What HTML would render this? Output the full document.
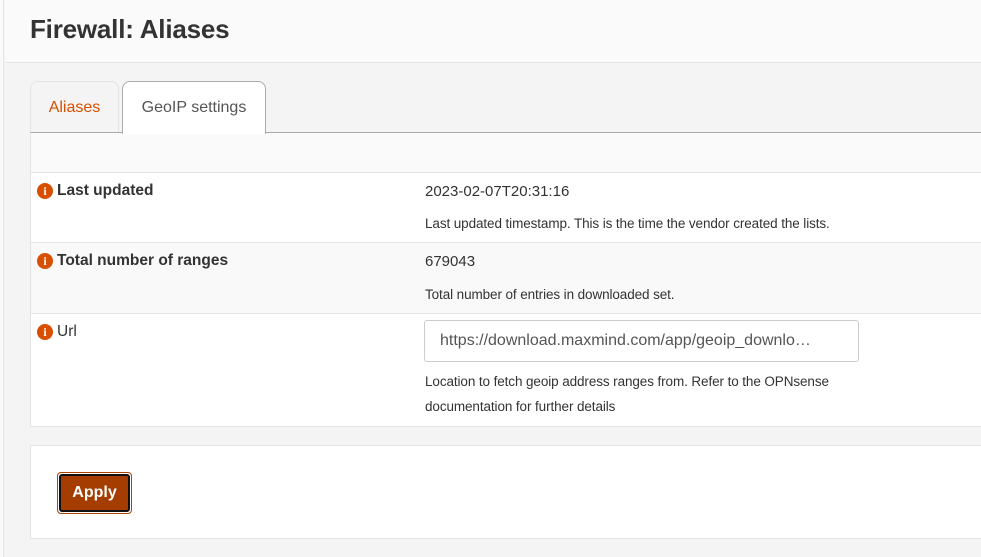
<!DOCTYPE html>
<html><head><style>
*{box-sizing:border-box;margin:0;padding:0}
body{width:981px;height:557px;overflow:hidden;background:#f4f4f4;font-family:"Liberation Sans",sans-serif;color:#333;position:relative}
.lb{position:absolute;left:0;top:0;width:4px;height:557px;background:#fafafa;border-right:1px solid #e4e4e4}
.hdr{position:absolute;left:5px;top:0;width:976px;height:63px;background:#fafafa;border-bottom:1px solid #e5e5e5}
.hdr h1{position:absolute;left:25px;top:14px;font-size:26px;font-weight:bold;color:#333;letter-spacing:-0.2px}
.tab{position:absolute;top:81px;height:52px;border:1px solid #e3e3e3;border-bottom:none;border-radius:8px 8px 0 0;font-size:16px;line-height:52px;text-align:center}
.t1{left:30px;width:89px;color:#d94f00;background:#f4f4f4}
.t2{left:122px;width:144px;background:#fff;border-color:#aaa;color:#555;height:53px;z-index:2}
.panel{position:absolute;left:30px;top:132px;width:960px;height:295px;background:#fff;border:1px solid #e3e3e3;border-top:1px solid #aaa;overflow:hidden}
.row{position:absolute;left:0;width:100%;border-top:1px solid #e6e6e6}
.lab{position:absolute;left:6px;top:9px;font-size:15.5px;font-weight:bold;color:#333;display:flex;align-items:center}
.ic{width:16px;height:16px;border-radius:50%;background:#d94f00;color:#fff;font:bold 12px "Liberation Serif",serif;text-align:center;line-height:16px;margin-right:4px}
.val{position:absolute;left:394px;font-size:15px;color:#333}
.help{position:absolute;left:394px;font-size:13.5px;color:#333;line-height:25px;letter-spacing:-0.1px}
.inp{position:absolute;left:393px;top:6px;width:435px;height:42px;border:1px solid #ccc;border-radius:3px;font-size:16px;color:#555;line-height:40px;padding-left:15px;white-space:nowrap;overflow:hidden}
.p2{position:absolute;left:30px;top:445px;width:960px;height:94px;background:#fff;border:1px solid #e3e3e3}
.btn{position:absolute;left:26px;top:26px;width:75px;height:42px;border:1px solid #a84300;border-radius:4px;padding:1px}
.btn div{width:100%;height:100%;background:#a63d00;border:2px solid #111;border-radius:3px;color:#fff;font-weight:bold;font-size:16px;text-align:center;line-height:34px}
</style></head><body>
<div class="lb"></div>
<div class="hdr"><h1>Firewall: Aliases</h1></div>
<div class="tab t1">Aliases</div>
<div class="tab t2">GeoIP settings</div>
<div class="panel">
 <div class="row" style="top:0;height:40px;background:#fafafa;border-top:none"></div>
 <div class="row" style="top:39px;height:70px;background:#fff">
  <div class="lab"><span class="ic">i</span>Last updated</div>
  <div class="val" style="top:10px">2023-02-07T20:31:16</div>
  <div class="help" style="top:38px">Last updated timestamp. This is the time the vendor created the lists.</div>
 </div>
 <div class="row" style="top:109px;height:71px;background:#f9f9f9">
  <div class="lab"><span class="ic">i</span>Total number of ranges</div>
  <div class="val" style="top:10px">679043</div>
  <div class="help" style="top:39px">Total number of entries in downloaded set.</div>
 </div>
 <div class="row" style="top:180px;height:113px;background:#fff">
  <div class="lab"><span class="ic">i</span><span style="font-weight:normal">Url</span></div>
  <div class="inp">https://download.maxmind.com/app/geoip_downlo…</div>
  <div class="help" style="top:55px">Location to fetch geoip address ranges from. Refer to the OPNsense<br>documentation for further details</div>
 </div>
</div>
<div class="p2"><div class="btn"><div>Apply</div></div></div>
</body></html>
